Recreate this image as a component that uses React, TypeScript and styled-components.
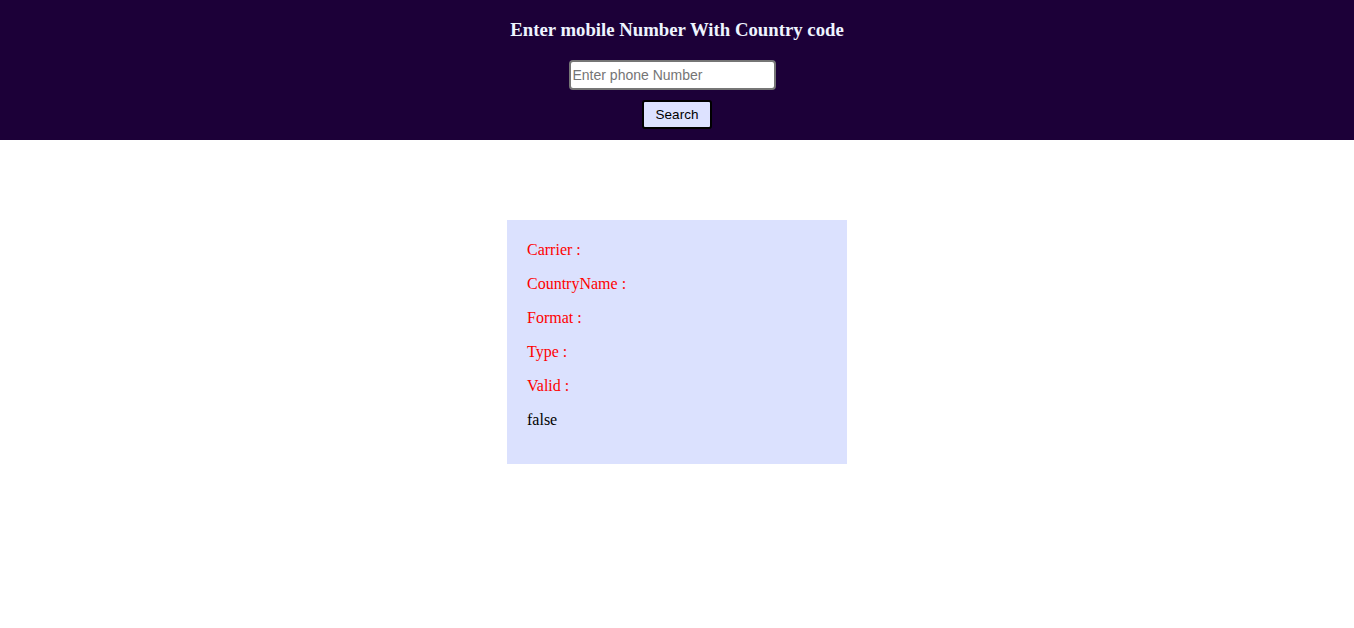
import React from "react";
import styled, { createGlobalStyle } from "styled-components";

const Global = createGlobalStyle`
  html, body { margin: 0; padding: 0; background: #ffffff; }
  body { font-family: "Liberation Serif", "Times New Roman", serif; }
`;

const Header = styled.header`
  background: #1c0038;
  height: 140px;
  box-sizing: border-box;
  padding-top: 19px;
  display: flex;
  flex-direction: column;
  align-items: center;
`;

const Title = styled.h3`
  margin: 0;
  color: #eef4ff;
  font-family: "Liberation Serif", "Times New Roman", serif;
  font-weight: bold;
  font-size: 18.75px;
  line-height: 22px;
`;

const PhoneInput = styled.input`
  margin: 19px 10px 0 0;
  width: 207px;
  height: 30px;
  box-sizing: border-box;
  border: 2px solid #767676;
  border-radius: 4px;
  padding: 1px 2px;
  font-family: "Liberation Sans", Arial, sans-serif;
  font-size: 14px;
  background: #ffffff;
  outline: none;
  &::placeholder { color: #757575; }
`;

const SearchButton = styled.button`
  margin-top: 10px;
  width: 70px;
  height: 29px;
  box-sizing: border-box;
  border: 2px solid #000000;
  border-radius: 3px;
  background: #dde2ff;
  color: #000000;
  font-family: "Liberation Sans", Arial, sans-serif;
  font-size: 13.5px;
  padding: 0;
  cursor: pointer;
`;

const Main = styled.main`
  display: flex;
  justify-content: center;
  padding-top: 80px;
`;

const Card = styled.section`
  width: 340px;
  box-sizing: border-box;
  background: #dbe1fe;
  padding: 21px 20px 35px;
  display: flex;
  flex-direction: column;
  gap: 16px;
`;

const Line = styled.p<{ $label?: boolean }>`
  margin: 0;
  font-size: 16px;
  line-height: 18px;
  color: ${(p) => (p.$label ? "#ff0000" : "#000000")};
`;

const fields = ["Carrier", "CountryName", "Format", "Type", "Valid"];

export default function App() {
  return (
    <>
      <Global />
      <Header>
        <Title>Enter mobile Number With Country code</Title>
        <PhoneInput placeholder="Enter phone Number" />
        <SearchButton>Search</SearchButton>
      </Header>
      <Main>
        <Card>
          {fields.map((f) => (
            <Line key={f} $label>
              {f} :
            </Line>
          ))}
          <Line>false</Line>
        </Card>
      </Main>
    </>
  );
}
